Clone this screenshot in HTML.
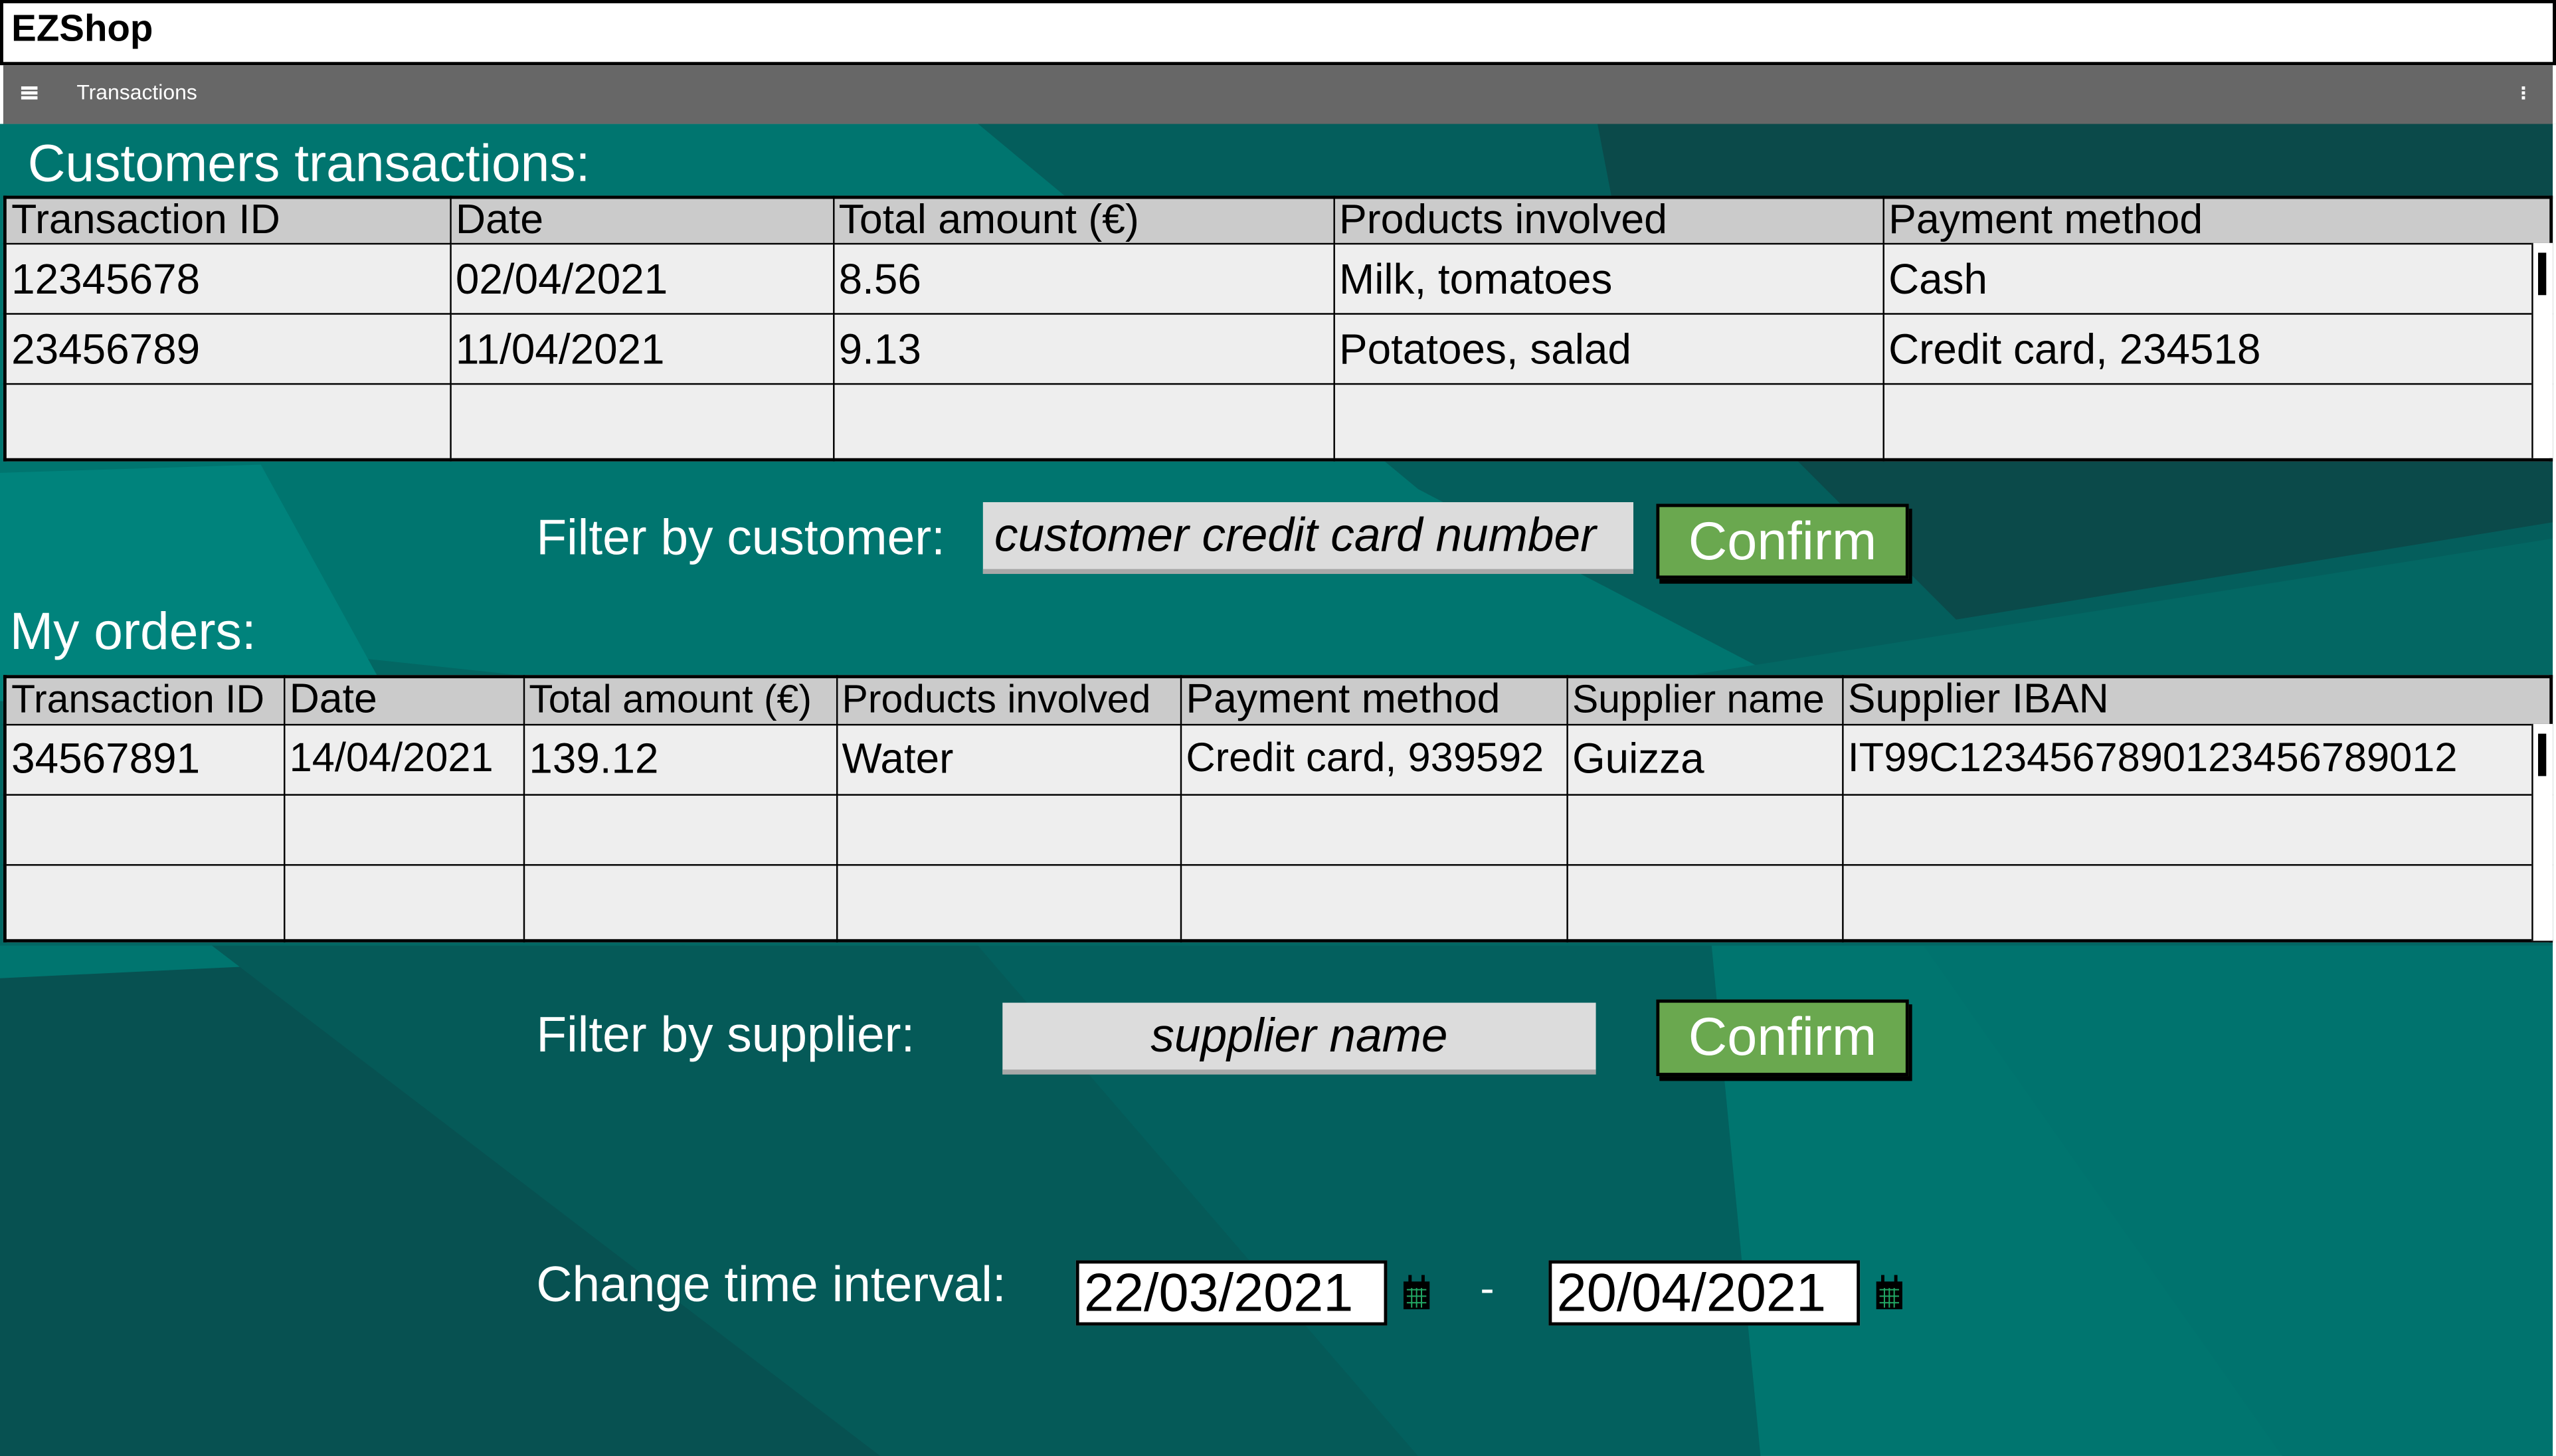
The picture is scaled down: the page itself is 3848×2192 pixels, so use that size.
<!DOCTYPE html>
<html><head><meta charset="utf-8"><style>
html,body{margin:0;padding:0;width:3848px;height:2192px;overflow:hidden;background:#fff}
#w{position:absolute;left:0;top:0;width:1568px;height:893px;transform:scale(2.4541,2.4546);transform-origin:0 0;font-family:"Liberation Sans",sans-serif;overflow:hidden}
.a{position:absolute}
.t{white-space:nowrap;line-height:1}
table{position:absolute;border-collapse:collapse;table-layout:fixed;background:#eee}
td{border:1.5px solid #000;padding:0 0 0 3px;font-size:26px;white-space:nowrap;overflow:hidden;color:#000;vertical-align:middle}
tr.h td{background:#cbcbcb;font-size:25.5px;vertical-align:top;line-height:27px}
.inp{background:#dcdcdc;border-bottom:3px solid #a8a8a8;font-style:italic;font-size:29px;text-align:center;line-height:42px}
.btn{background:#6aa84f;border:2px solid #000;box-shadow:2px 3px 0 #000;color:#fff;font-size:33px;text-align:center;line-height:42px}
.lbl{color:#fff;font-size:30.5px}
.date{background:#fff;border:2px solid #000;font-size:33px;line-height:36px;padding-left:3px}
.sb{position:absolute;background:#fff;border-left:1px solid #000}
</style></head><body><div id="w">
<svg class="a" style="left:0;top:76px" width="1568" height="817" viewBox="0 76 1568 817">
<rect x="0" y="76" width="1568" height="817" fill="#00756f"/>
<polygon points="400,76 980,76 1568,76 1568,360 1100,420 870,300 600,76" fill="#045e5c"/>
<polygon points="980,76 1568,76 1568,320 1200,380 1000,180" fill="#0b4a4a"/>
<polygon points="0,380 560,440 1000,420 1568,330 1568,580 0,580" fill="#036763"/>
<polygon points="0,600 420,580 700,893 0,893" fill="#075151"/>
<polygon points="130,580 600,580 870,893 540,893" fill="#055a58"/>
<polygon points="600,580 1050,580 1080,893 870,893" fill="#03605e"/>
<polygon points="1180,580 1568,580 1568,893 1400,893" fill="#00736e"/>
<polygon points="0,290 160,285 240,430 0,430" fill="#00837c"/>
</svg>
<div class="a" style="left:0;top:0;width:1564px;height:36px;background:#fff;border:2px solid #000"></div>
<div class="a t" style="left:7px;top:6px;font-size:23px;font-weight:bold">EZShop</div>
<div class="a" style="left:2px;top:40px;width:1564px;height:36px;background:#676767"></div>
<div class="a" style="left:13px;top:53px;width:10px;height:2px;background:#fff;box-shadow:0 3px 0 #fff,0 6px 0 #fff"></div>
<div class="a t" style="left:47px;top:50px;font-size:13px;color:#fff">Transactions</div>
<div class="a" style="left:1547px;top:53px;width:2px;height:2px;background:#fff;box-shadow:0 3px 0 #fff,0 6px 0 #fff"></div>
<div class="a" style="left:1566px;top:76px;width:2px;height:817px;background:#fff"></div>
<div class="a t lbl" style="left:17px;top:84px;font-size:32px">Customers transactions:</div>
<table style="left:2px;top:120px;width:1564px;height:162px;border:2px solid #000">
<colgroup><col style="width:273px"><col style="width:235px"><col style="width:307px"><col style="width:337px"><col></colgroup>
<tr class="h" style="height:28px"><td>Transaction ID</td><td>Date</td><td>Total amount (€)</td><td>Products involved</td><td>Payment method</td></tr>
<tr style="height:43px"><td>12345678</td><td>02/04/2021</td><td>8.56</td><td>Milk, tomatoes</td><td>Cash</td></tr>
<tr style="height:43px"><td>23456789</td><td>11/04/2021</td><td>9.13</td><td>Potatoes, salad</td><td>Credit card, 234518</td></tr>
<tr style="height:46px"><td></td><td></td><td></td><td></td><td></td></tr>
</table>
<div class="sb" style="left:1553px;top:149px;width:12px;height:132px"><div class="a" style="left:3px;top:6px;width:5px;height:26px;background:#000"></div></div>
<div class="a t lbl" style="left:329px;top:315px">Filter by customer:</div>
<div class="a inp t" style="left:603px;top:308px;width:399px;text-align:left;padding-left:7px;box-sizing:border-box;height:44px">customer credit card number</div>
<div class="a btn t" style="left:1016px;top:309px;width:151px;height:42px">Confirm</div>
<div class="a t lbl" style="left:6px;top:371px;font-size:32px">My orders:</div>
<table style="left:2px;top:414px;width:1564px;height:164px;border:2px solid #000">
<colgroup><col style="width:171px"><col style="width:147px"><col style="width:192px"><col style="width:211px"><col style="width:237px"><col style="width:169px"><col></colgroup>
<tr class="h" style="height:29px"><td style="font-size:24px">Transaction ID</td><td>Date</td><td style="font-size:24px">Total amount (€)</td><td style="font-size:24px">Products involved</td><td>Payment method</td><td style="font-size:24px">Supplier name</td><td>Supplier IBAN</td></tr>
<tr style="height:43px"><td>34567891</td><td style="font-size:25px">14/04/2021</td><td>139.12</td><td>Water</td><td style="font-size:25px">Credit card, 939592</td><td>Guizza</td><td style="font-size:25px">IT99C1234567890123456789012</td></tr>
<tr style="height:43px"><td></td><td></td><td></td><td></td><td></td><td></td><td></td></tr>
<tr style="height:47px"><td></td><td></td><td></td><td></td><td></td><td></td><td></td></tr>
</table>
<div class="sb" style="left:1553px;top:444px;width:12px;height:133px"><div class="a" style="left:3px;top:6px;width:5px;height:26px;background:#000"></div></div>
<div class="a t lbl" style="left:329px;top:620px">Filter by supplier:</div>
<div class="a inp t" style="left:615px;top:615px;width:364px;height:41px">supplier name</div>
<div class="a btn t" style="left:1016px;top:613px;width:151px;height:43px">Confirm</div>
<div class="a t lbl" style="left:329px;top:773px">Change time interval:</div>
<div class="a date t" style="left:660px;top:773px;width:184px;height:36px">22/03/2021</div>
<div class="a t" style="left:908px;top:777px;font-size:26px;color:#fff">-</div>
<div class="a date t" style="left:950px;top:773px;width:184px;height:36px">20/04/2021</div>
<svg class="a" style="left:860px;top:782px" width="18" height="22" viewBox="0 0 18 22"><rect x="1" y="4" width="16" height="17" fill="#000"/><rect x="4" y="0" width="2" height="6" fill="#000"/><rect x="12" y="0" width="2" height="6" fill="#000"/><path d="M3 9h12M3 13h12M3 17h12M6 8v12M9 8v12M12 8v12" stroke="#2a6" stroke-width="0.8"/></svg>
<svg class="a" style="left:1150px;top:782px" width="18" height="22" viewBox="0 0 18 22"><rect x="1" y="4" width="16" height="17" fill="#000"/><rect x="4" y="0" width="2" height="6" fill="#000"/><rect x="12" y="0" width="2" height="6" fill="#000"/><path d="M3 9h12M3 13h12M3 17h12M6 8v12M9 8v12M12 8v12" stroke="#2a6" stroke-width="0.8"/></svg>
</div></body></html>
